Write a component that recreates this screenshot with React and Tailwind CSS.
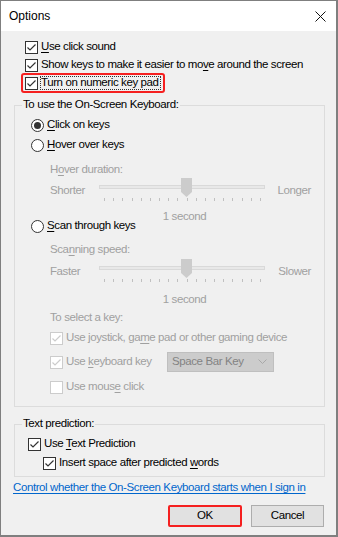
import { useState } from 'react';

const font = { fontFamily: '"Liberation Sans", Arial, sans-serif' };

const Check = ({ checked = true, disabled = false }) => (
  <span
    className={
      disabled
        ? "w-[13px] h-[13px] shrink-0 border border-[#cccccc] bg-white flex items-center justify-center"
        : "w-[13px] h-[13px] shrink-0 border border-[#333333] bg-white flex items-center justify-center"
    }
  >
    {checked && (
      <svg width="11" height="11" viewBox="0 0 11 11">
        <polyline
          points="1.5,5.5 4,8 9.5,2.5"
          fill="none"
          stroke={disabled ? "#cccccc" : "#333333"}
          strokeWidth="1.2"
        />
      </svg>
    )}
  </span>
);

const Radio = ({ checked }) => (
  <span className="w-[13px] h-[13px] shrink-0 rounded-full border border-[#333333] bg-white flex items-center justify-center">
    {checked && <span className="w-[7px] h-[7px] rounded-full bg-[#333333]" />}
  </span>
);

// underline one access-key letter
const Key = ({ children }) => <span className="underline underline-offset-2">{children}</span>;

const Slider = ({ left, right }) => (
  <div className="h-[24px] flex pl-[35px]">
    <div className="w-[49px] h-[24px] flex items-center pt-[3px]">{left}</div>
    <div className="relative w-[166px] h-[24px]">
      <div className="mt-[8px] h-[4px] border border-[#d9d9d9] bg-[#e8e8e8]" />
      <div className="mt-[9px] ml-[5px] w-[157px] flex justify-between">
        {Array.from({ length: 18 }).map((_, i) => (
          <span key={i} className="w-[1px] h-[3px] bg-[#c0c0c0]" />
        ))}
      </div>
      <svg className="absolute left-[82px] top-[1px]" width="11" height="19" viewBox="0 0 11 19">
        <polygon points="0,0 11,0 11,14 5.5,19 0,14" fill="#cccccc" />
      </svg>
    </div>
    <div className="w-[46px] h-[24px] flex items-center justify-end pt-[3px]">{right}</div>
  </div>
);

export default function App() {
  const [mode] = useState('click');

  return (
    <div
      className="w-[338px] h-[537px] bg-[#f0f0f0] border-l border-t border-r-2 border-b-2 border-[#7f7f7f] text-[11.5px] tracking-[-0.4px] leading-none text-black whitespace-nowrap overflow-hidden"
      style={font}
    >
      {/* Title bar */}
      <div className="h-[30px] bg-white flex items-center justify-between pl-[8px] pr-[10px]">
        <span className="text-[12px] tracking-normal">Options</span>
        <svg width="11" height="11" viewBox="0 0 11 11">
          <path d="M0.5 0.5 L10.5 10.5 M10.5 0.5 L0.5 10.5" stroke="#111" strokeWidth="1" />
        </svg>
      </div>

      <div className="pl-[13px] pr-[11px]">
        {/* top checkboxes */}
        <div className="pt-[7px] pl-[11px]">
          <div className="h-[18px] flex items-center gap-[3px]">
            <Check />
            <span><Key>U</Key>se click sound</span>
          </div>
          <div className="h-[18px] flex items-center gap-[3px]">
            <Check />
            <span>Show keys to make it easier to mo<Key>v</Key>e around the screen</span>
          </div>
          <div className="relative h-[18px] flex items-center gap-[3px]">
            <Check />
            <span className="outline-1 outline-dotted outline-[#333] pr-[1px]">Turn on numeric key pad</span>
            <span className="absolute -left-[4px] -top-[1px] w-[144px] h-[20px] border-2 border-[#f52020] rounded-[3px]" />
          </div>
        </div>

        {/* On-Screen Keyboard group */}
        <div className="relative mt-[13px] border border-[#dcdcdc] pt-[9px] pb-[9px]">
          <span className="absolute left-[7px] -top-[7px] px-[1px] bg-[#f0f0f0]">To use the On-Screen Keyboard:</span>

          <div className="pl-[16px]">
            <div className="h-[20px] flex items-center gap-[3px]">
              <Radio checked={mode === 'click'} />
              <span><Key>C</Key>lick on keys</span>
            </div>
            <div className="h-[20px] flex items-center gap-[3px]">
              <Radio checked={mode === 'hover'} />
              <span><Key>H</Key>over over keys</span>
            </div>
          </div>

          <div className="text-[#a0a0a0]">
            <div className="mt-[8px] h-[14px] flex items-center pl-[35px]">
              <span>H<Key>o</Key>ver duration:</span>
            </div>
            <Slider left="Shorter" right="Longer" />
            <div className="mt-[10px] h-[12px] flex items-center justify-center pl-[50px] pr-[20px]">1 second</div>
          </div>

          <div className="pl-[16px] -mt-[7px]">
            <div className="h-[20px] flex items-center gap-[3px]">
              <Radio checked={mode === 'scan'} />
              <span><Key>S</Key>can through keys</span>
            </div>
          </div>

          <div className="text-[#a0a0a0]">
            <div className="mt-[7px] h-[14px] flex items-center pl-[35px]">
              <span>Sca<Key>n</Key>ning speed:</span>
            </div>
            <div className="mt-[1px]">
              <Slider left="Faster" right="Slower" />
            </div>
            <div className="mt-[12px] h-[12px] flex items-center justify-center pl-[50px] pr-[20px]">1 second</div>
            <div className="mt-[6px] h-[12px] flex items-center pl-[35px]">To select a key:</div>

            <div className="pl-[35px]">
              <div className="mt-[4px] h-[20px] flex items-center gap-[3px]">
                <Check disabled />
                <span>Use joystick, ga<Key>m</Key>e pad or other gaming device</span>
              </div>
              <div className="mt-[4px] h-[20px] flex items-center gap-[3px]">
                <Check disabled />
                <span className="w-[98px]">Use <Key>k</Key>eyboard key</span>
                <div className="w-[107px] h-[20px] bg-[#cccccc] border border-[#bfbfbf] flex items-center justify-between pl-[4px] pr-[6px] text-[#838383]">
                  <span>Space Bar Key</span>
                  <svg width="9" height="6" viewBox="0 0 9 6">
                    <polyline points="0.5,0.5 4.5,4.5 8.5,0.5" fill="none" stroke="#a8a8a8" strokeWidth="1" />
                  </svg>
                </div>
              </div>
              <div className="mt-[5px] h-[20px] flex items-center gap-[3px]">
                <Check checked={false} disabled />
                <span>Use mous<Key>e</Key> click</span>
              </div>
            </div>
          </div>
        </div>

        {/* Text prediction group */}
        <div className="relative mt-[17px] border border-[#dcdcdc] pt-[10px] pb-[4px]">
          <span className="absolute left-[7px] -top-[7px] px-[1px] bg-[#f0f0f0]">Text prediction:</span>
          <div className="pl-[13px] h-[18px] flex items-center gap-[3px]">
            <Check />
            <span>Use <Key>T</Key>ext Prediction</span>
          </div>
          <div className="pl-[28px] mt-[1px] h-[18px] flex items-center gap-[3px]">
            <Check />
            <span>Insert space after predicted <Key>w</Key>ords</span>
          </div>
        </div>

        <div className="mt-[3px] h-[16px] flex items-center">
          <a className="text-[#0066cc] underline underline-offset-2 -ml-[1px]">
            Control whether the On-Screen Keyboard starts when I sign in
          </a>
        </div>

        <div className="mt-[9px] flex justify-end gap-[9px] pr-[1px]">
          <button className="w-[74px] h-[22px] bg-[#e1e1e1] border-2 border-[#f52020] rounded-[2px] flex items-center justify-center">
            OK
          </button>
          <button className="w-[73px] h-[22px] bg-[#e1e1e1] border border-[#adadad] flex items-center justify-center">
            Cancel
          </button>
        </div>
      </div>
    </div>
  );
}
